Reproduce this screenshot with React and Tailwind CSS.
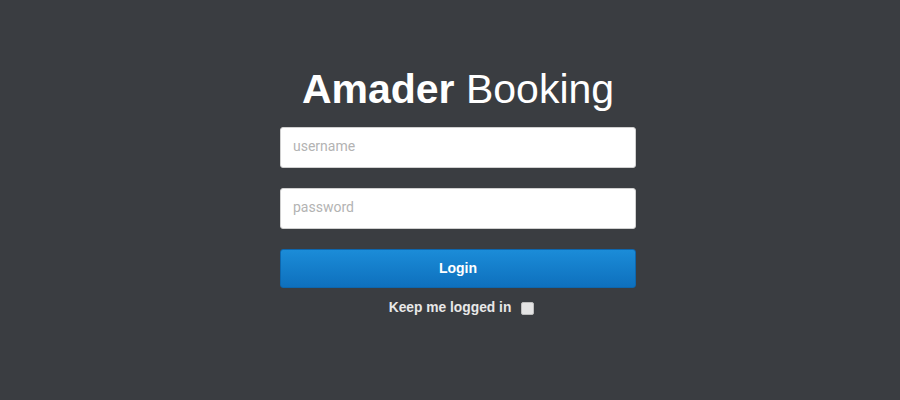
export default function App() {
  return (
    <div className="w-[900px] h-[400px] bg-[#3a3d41] pl-[16px] flex flex-col items-center" style={{ fontFamily: '"Liberation Sans", Arial, sans-serif' }}>
      <h1 className="mt-[60px] h-[58px] text-[41px] leading-[58px] text-white">
        <span className="font-bold">Amader</span> Booking
      </h1>
      <div className="mt-[9px] w-[356px] flex flex-col">
        <input
          className="h-[41px] w-full rounded-[3px] bg-white px-3 pb-[3px] text-[14px] text-gray-700 placeholder:text-[#b3b3b3] outline-none border border-[#d0d0d0]"
          style={{ fontFamily: 'Roboto, "Liberation Sans", sans-serif' }}
          placeholder="username"
        />
        <input
          type="password"
          className="mt-[20px] h-[41px] w-full rounded-[3px] bg-white px-3 pb-[3px] text-[14px] text-gray-700 placeholder:text-[#b3b3b3] outline-none border border-[#d0d0d0]"
          style={{ fontFamily: 'Roboto, "Liberation Sans", sans-serif' }}
          placeholder="password"
        />
        <button className="mt-[20px] h-[39px] w-full rounded-[3px] bg-gradient-to-b from-[#1b8cd8] to-[#0e70bd] border border-[#0d66ad] text-white font-bold text-[14px]">
          Login
        </button>
        <label className="mt-[10px] pl-[7px] flex items-center justify-center gap-[10px] text-[13.8px] font-bold text-[#e8e8e8]">
          <span>Keep me logged in</span>
          <span className="w-[13px] h-[13px] rounded-[2px] bg-[#e4e4e4] border border-[#bdbdbd]" />
        </label>
      </div>
    </div>
  );
}
